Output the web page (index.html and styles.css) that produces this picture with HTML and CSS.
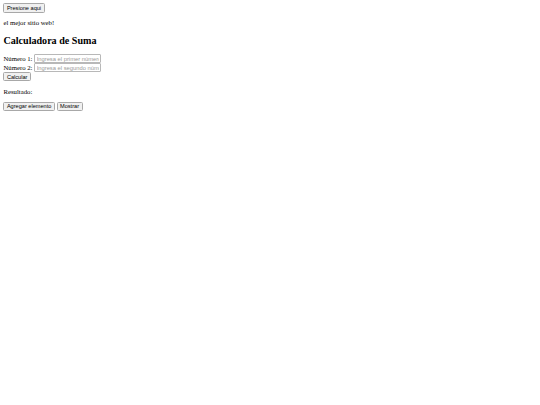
FILE: index.html
```html
<!DOCTYPE html>
<html>
<head>
<meta charset="utf-8">
<link rel="stylesheet" href="styles.css">
</head>
<body>
<button class="btn">Presione aqui</button>
<p class="text">el mejor sitio web!</p>
<h2 class="title">Calculadora de Suma</h2>
<form class="form">
<label class="lbl">Número 1:</label> <input class="field" type="text" placeholder="Ingresa el primer número"><br>
<label class="lbl">Número 2:</label> <input class="field" type="text" placeholder="Ingresa el segundo número"><br>
<button class="btn" type="button">Calcular</button>
</form>
<p class="text">Resultado: </p>
<button class="btn">Agregar elemento</button> <button class="btn">Mostrar</button>
</body>
</html>
```
FILE: styles.css
```css
body {
  margin: 3.4px;
  font-family: "Liberation Serif", serif;
  font-size: 6.75px;
  color: #000;
  background: #fff;
}
.text {
  margin: 6.75px 0;
}
.title {
  font-size: 10.1px;
  font-weight: bold;
  margin: 8.4px 0;
}
.form {
  margin: 0;
}
.btn {
  font-family: "Liberation Sans", Arial, sans-serif;
  font-size: 5.6px;
  padding: 0.6px 2.5px;
  border: 1px solid #a8a8a8;
  border-radius: 1.5px;
  background: #f0f0f0;
  color: #000;
  margin: 0;
}
.field {
  font-family: "Liberation Sans", Arial, sans-serif;
  font-size: 5.8px;
  padding: 0.5px 1.5px;
  border: 1px solid #b8b8b8;
  border-radius: 1px;
  width: 62px;
  margin: 0;
  color: #000;
}
.field::placeholder {
  color: #9a9a9a;
}
```
